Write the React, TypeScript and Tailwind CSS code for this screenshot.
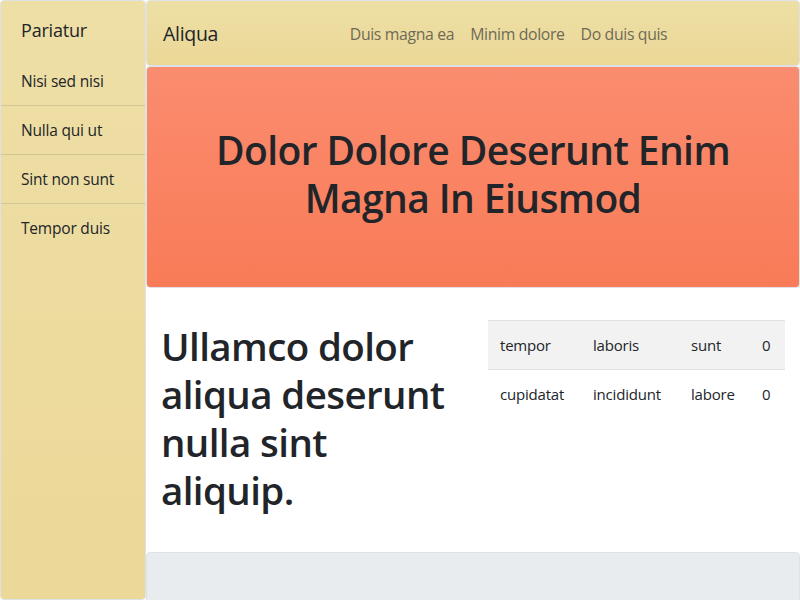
import React from "react";

const font = { fontFamily: '"Open Sans", "Noto Sans", sans-serif' };

export default function App() {
  const items = ["Nisi sed nisi", "Nulla qui ut", "Sint non sunt", "Tempor duis"];
  const rows = [
    ["tempor", "laboris", "sunt", "0"],
    ["cupidatat", "incididunt", "labore", "0"],
  ];
  return (
    <div className="flex h-[600px] w-[800px] overflow-hidden bg-white text-[#212529]" style={font}>
      <aside className="flex w-[146px] shrink-0 flex-col rounded border border-[#dee2e6] bg-gradient-to-b from-[#eedfa6] to-[#ecd898]">
        <div className="px-5 pt-[17px] pb-[15px] text-[18px] leading-[24px] tracking-[-0.2px]">Pariatur</div>
        {items.map((t, i) => (
          <div
            key={t}
            className={`px-5 py-3 text-[15.5px] leading-[24px] tracking-[-0.2px] ${i > 0 ? "border-t border-[#d4c694]" : ""}`}
          >
            {t}
          </div>
        ))}
      </aside>
      <main className="flex min-w-0 flex-1 flex-col">
        <nav className="flex h-[66px] shrink-0 items-center rounded border border-[#dee2e6] bg-gradient-to-b from-[#eddfa5] to-[#ebd897] px-4 pt-[2px]">
          <span className="mr-4 text-[19.5px] leading-[24px] tracking-[-0.3px]">Aliqua</span>
          <div className="mx-auto flex pt-[1px] text-[15.8px] tracking-[-0.35px] text-[#6f6a58]">
            <span className="px-2">Duis magna ea</span>
            <span className="px-2">Minim dolore</span>
            <span className="px-2">Do duis quis</span>
          </div>
        </nav>
        <section className="flex h-[222px] shrink-0 items-center justify-center rounded border border-[#dee2e6] bg-gradient-to-b from-[#fa8c6f] to-[#f97b57] px-12 pb-[6px]">
          <h1 className="text-center text-[39px] font-semibold leading-[48px] tracking-[-0.6px]">
            Dolor Dolore Deserunt Enim
            <br />
            Magna In Eiusmod
          </h1>
        </section>
        <section className="grid shrink-0 grid-cols-2 px-[15px] pt-8 pb-[38px]">
          <div className="pr-[15px]">
            <h2 className="mt-[2px] text-[38.5px] font-semibold leading-[48px] tracking-[-0.6px]">
              Ullamco dolor aliqua deserunt nulla sint aliquip.
            </h2>
          </div>
          <div className="pl-[15px]">
            <table className="w-full border-collapse text-[15px] tracking-[-0.2px]">
              <tbody>
                {rows.map((r, i) => (
                  <tr key={i} className={`border-t border-b border-[#dee2e6] ${i === 0 ? "bg-[#f2f2f2]" : "border-b-0"}`}>
                    {r.map((c, j) => (
                      <td
                        key={j}
                        className={`p-3 leading-[24px] ${j === 0 ? "w-[93px]" : j === 1 ? "w-[98px]" : j === 2 ? "w-[71px]" : ""}`}
                      >
                        {c}
                      </td>
                    ))}
                  </tr>
                ))}
              </tbody>
            </table>
          </div>
        </section>
        <div className="h-[120px] shrink-0 rounded border border-[#dee2e6] bg-[#e9ecef]" />
      </main>
    </div>
  );
}
